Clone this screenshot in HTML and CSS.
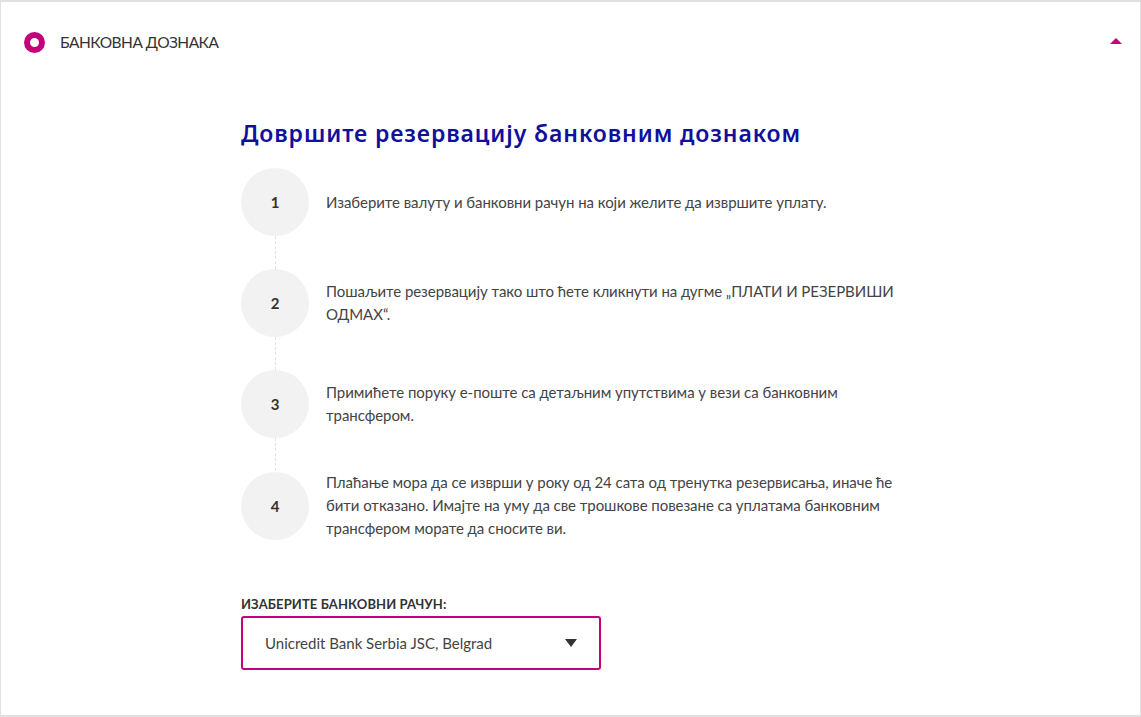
FILE: index.html
```html
<!DOCTYPE html>
<html lang="sr">
<head>
<meta charset="utf-8">
<title>Банковна дознака</title>
<link rel="stylesheet" href="styles.css">
</head>
<body>
<section class="card">
  <header class="card-head">
    <span class="ring"></span>
    <span class="head-title">БАНКОВНА ДОЗНАКА</span>
    <span class="caret-up"></span>
  </header>
  <div class="card-body">
    <h1 class="title">Довршите резервацију банковним дознаком</h1>
    <ol class="steps">
      <li class="step">
        <span class="num">1</span>
        <p class="step-text">Изаберите валуту и банковни рачун на који желите да извршите уплату.</p>
      </li>
      <li class="step">
        <span class="num">2</span>
        <p class="step-text">Пошаљите резервацију тако што ћете кликнути на дугме „ПЛАТИ И РЕЗЕРВИШИ ОДМАХ“.</p>
      </li>
      <li class="step">
        <span class="num">3</span>
        <p class="step-text">Примићете поруку е-поште са детаљним упутствима у вези са банковним трансфером.</p>
      </li>
      <li class="step">
        <span class="num">4</span>
        <p class="step-text">Плаћање мора да се изврши у року од 24 сата од тренутка резервисања, иначе ће бити отказано. Имајте на уму да све трошкове повезане са уплатама банковним трансфером морате да сносите ви.</p>
      </li>
    </ol>
    <label class="field-label">ИЗАБЕРИТЕ БАНКОВНИ РАЧУН:</label>
    <div class="select">
      <span class="select-value">Unicredit Bank Serbia JSC, Belgrad</span>
      <span class="caret-down"></span>
    </div>
  </div>
</section>
</body>
</html>
```

FILE: styles.css
```css
* { box-sizing: border-box; }
html, body { margin: 0; padding: 0; background: #fff; }
body {
  font-family: "Lato", "Liberation Sans", sans-serif;
  color: #444;
  width: 1141px;
  height: 717px;
  overflow: hidden;
}
.card {
  height: 717px;
  border: 1px solid #e0e0e0;
  border-top-width: 2px;
  border-bottom-width: 2px;
  background: #fff;
}
.card-head {
  display: flex;
  align-items: center;
  height: 80px;
  padding: 0 18px 0 23px;
}
.ring {
  width: 21px;
  height: 21px;
  border-radius: 50%;
  border: 6px solid #c4007b;
  flex: none;
}
.head-title {
  margin-left: 15px;
  font-size: 15.5px;
  color: #333;
  letter-spacing: -0.5px;
  flex: 1;
}
.caret-up {
  width: 0;
  height: 0;
  border-left: 6px solid transparent;
  border-right: 6px solid transparent;
  border-bottom: 6px solid #c4007b;
  margin-top: -2px;
}
.card-body {
  padding: 34px 0 0 240px;
}
.title {
  margin: 0;
  font-family: "Noto Sans", sans-serif;
  font-weight: 600;
  font-size: 23px;
  line-height: 34px;
  color: #10109a;
  letter-spacing: 0.9px;
}
.steps {
  list-style: none;
  margin: 18px 0 0 0;
  padding: 0;
  width: 670px;
}
.step {
  display: flex;
  align-items: center;
  min-height: 68px;
  position: relative;
}
.step + .step { margin-top: 33px; }
.step + .step::before {
  content: "";
  position: absolute;
  left: 34px;
  top: -33px;
  height: 33px;
  border-left: 1px dashed #e2e2e2;
}
.num {
  flex: none;
  width: 68px;
  height: 68px;
  border-radius: 50%;
  background: #f2f2f2;
  display: flex;
  align-items: center;
  justify-content: center;
  font-weight: 700;
  font-size: 15px;
  color: #333;
}
.step-text {
  margin: 0 0 0 17px;
  font-size: 15px;
  line-height: 23px;
  color: #444;
  max-width: 585px;
  letter-spacing: -0.05px;
}
.field-label {
  display: block;
  margin-top: 56px;
  font-size: 13px;
  font-weight: 700;
  color: #333;
  letter-spacing: 0.1px;
}
.select {
  margin-top: 4px;
  width: 360px;
  height: 54px;
  border: 2px solid #c4007b;
  border-radius: 3px;
  display: flex;
  align-items: center;
  justify-content: space-between;
  padding: 0 22px 0 22px;
}
.select-value {
  font-size: 15px;
  color: #444;
}
.caret-down {
  width: 0;
  height: 0;
  border-left: 6px solid transparent;
  border-right: 6px solid transparent;
  border-top: 8px solid #333;
}
```
